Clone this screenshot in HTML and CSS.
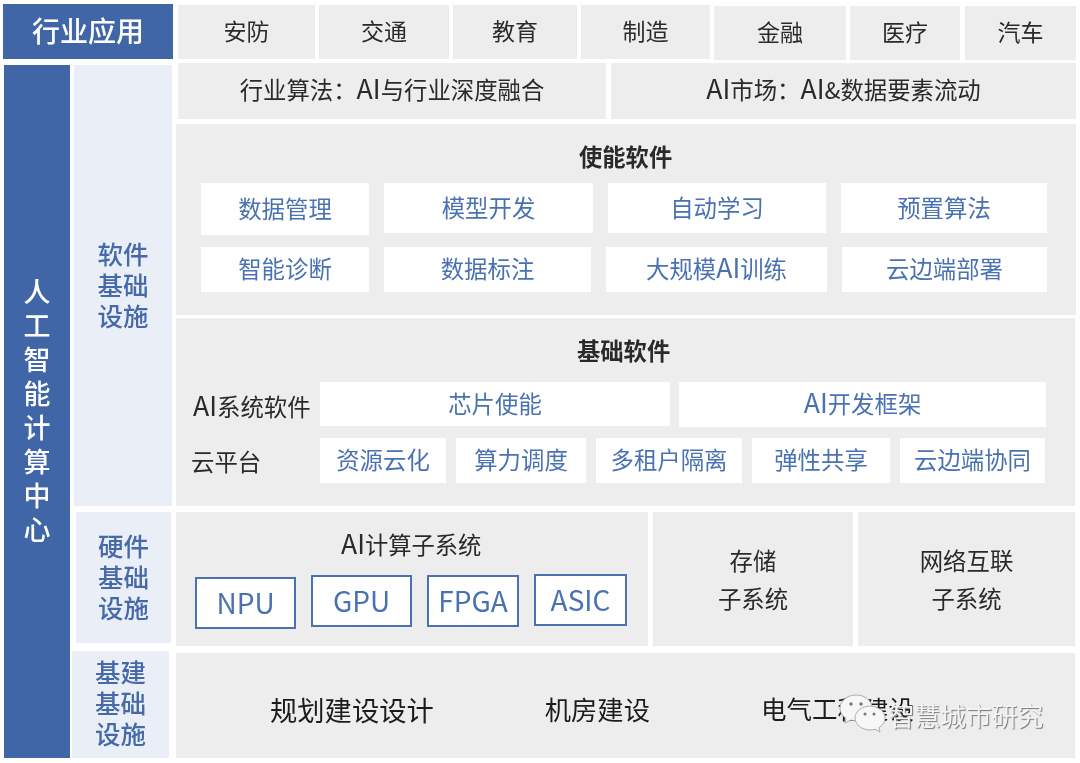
FILE: index.html
```html
<!DOCTYPE html>
<html lang="zh-CN">
<head>
<meta charset="utf-8">
<title>人工智能计算中心</title>
<link rel="stylesheet" href="styles.css">
</head>
<body>
<div class="page">
  <div class="top">
    <div class="top-head">行业应用</div>
    <div class="top-cell">安防</div>
    <div class="top-cell">交通</div>
    <div class="top-cell">教育</div>
    <div class="top-cell">制造</div>
    <div class="top-cell">金融</div>
    <div class="top-cell">医疗</div>
    <div class="top-cell">汽车</div>
  </div>
  <div class="main">
    <div class="side">人<br>工<br>智<br>能<br>计<br>算<br>中<br>心</div>
    <div class="cat cat-soft">软件<br>基础<br>设施</div>
    <div class="soft">
      <div class="algo">
        <div class="algo-cell"><span>行业算法&#xFF1A;<span class="en">AI</span>与行业深度融合</span></div>
        <div class="algo-cell"><span><span class="en">AI</span>市场&#xFF1A;<span class="en">AI</span>&amp;数据要素流动</span></div>
      </div>
      <section class="sec sec-enable">
        <h2 class="sec-title">使能软件</h2>
        <div class="row row-e1">
          <div class="item">数据管理</div>
          <div class="item">模型开发</div>
          <div class="item">自动学习</div>
          <div class="item">预置算法</div>
        </div>
        <div class="row row-e2">
          <div class="item">智能诊断</div>
          <div class="item">数据标注</div>
          <div class="item"><span>大规模<span class="en">AI</span>训练</span></div>
          <div class="item">云边端部署</div>
        </div>
      </section>
      <section class="sec sec-base">
        <h2 class="sec-title">基础软件</h2>
        <div class="row row-b1">
          <div class="label label-ai"><span><span class="en">AI</span>系统软件</span></div>
          <div class="item">芯片使能</div>
          <div class="item"><span><span class="en">AI</span>开发框架</span></div>
        </div>
        <div class="row row-b2">
          <div class="label label-cloud">云平台</div>
          <div class="item">资源云化</div>
          <div class="item">算力调度</div>
          <div class="item">多租户隔离</div>
          <div class="item">弹性共享</div>
          <div class="item">云边端协同</div>
        </div>
      </section>
    </div>
    <div class="cat cat-hard">硬件<br>基础<br>设施</div>
    <div class="hard">
      <div class="hard-ai">
        <div class="hard-title"><span class="en">AI</span>计算子系统</div>
        <div class="chips">
          <div class="chip chip-npu">NPU</div>
          <div class="chip chip-gpu">GPU</div>
          <div class="chip chip-fpga">FPGA</div>
          <div class="chip chip-asic">ASIC</div>
        </div>
      </div>
      <div class="hard-sub hard-store">存储<br>子系统</div>
      <div class="hard-sub hard-net">网络互联<br>子系统</div>
    </div>
    <div class="cat cat-infra">基建<br>基础<br>设施</div>
    <div class="infra">
      <div class="infra-a">规划建设设计</div>
      <div class="infra-b">机房建设</div>
      <div class="infra-c">电气工程建设</div>
    </div>
  </div>
  <div class="mark">
    <svg class="mark-icon" width="50" height="40" viewBox="0 0 50 40">
      <path class="mark-back" d="M18 2C9 2 2 8 2 15c0 4 2 8 6 10l-1 5 6-3c2 .5 3 .6 5 .6 9 0 16-6 16-13S27 2 18 2z"/>
      <circle class="mark-eye" cx="13" cy="11" r="1.7"/>
      <circle class="mark-eye" cx="23" cy="11" r="1.7"/>
      <path class="mark-front" d="M32 13c-8 0-15 5.500-15 12s7 12 15 12c2 0 3-.2 5-.8l5 2.800-1-4.500c4-2.300 6-5.700 6-9.500 0-6.500-7-12-15-12z"/>
      <circle class="mark-eye" cx="27" cy="21" r="1.500"/>
      <circle class="mark-eye" cx="36" cy="21" r="1.500"/>
    </svg>
    <span class="mark-text">智慧城市研究</span>
  </div>
</div>
</body>
</html>
```
FILE: styles.css
```css
* { box-sizing: border-box; }
html, body { margin: 0; padding: 0; background: #fff; }
body {
  width: 1080px;
  height: 763px;
  overflow: hidden;
  font-family: "Noto Sans CJK SC", "Noto Sans", sans-serif;
  color: #2a2a2a;
}
.page {
  position: relative;
  width: 1080px;
  height: 763px;
  filter: blur(0.4px);
}
.en { font-size: 1.14em; line-height: 0; }

/* top row */
.top {
  display: flex;
  height: 60px;
  padding: 4px 0 0 3px;
}
.top-head {
  flex: 0 0 170px;
  height: 55px;
  margin-right: 5px;
  padding-bottom: 4px;
  background: #4166a8;
  color: #fff;
  font-size: 28px;
  font-weight: 500;
  display: flex;
  align-items: center;
  justify-content: center;
}
.top-cell {
  height: 54px;
  margin-top: 1px;
  padding-bottom: 4px;
  background: #ededed;
  font-size: 23px;
  display: flex;
  align-items: center;
  justify-content: center;
}
.top-cell:nth-child(2) { flex: 0 0 137px; margin-right: 4px; }
.top-cell:nth-child(3) { flex: 0 0 130px; margin-right: 4px; }
.top-cell:nth-child(4) { flex: 0 0 124px; margin-right: 4px; }
.top-cell:nth-child(5) { flex: 0 0 129px; margin-right: 4px; }
.top-cell:nth-child(6) { flex: 0 0 132px; margin-right: 4px; margin-top: 2px; }
.top-cell:nth-child(7) { flex: 0 0 110px; margin-right: 5px; margin-top: 2px; }
.top-cell:nth-child(8) { flex: 0 0 111px; margin-top: 2px; }

/* main grid */
.main {
  display: grid;
  grid-template-columns: 66px 98px 900px;
  grid-template-rows: 443px 134px 106px;
  column-gap: 4px;
  row-gap: 6px;
  margin-top: 3px;
  padding-left: 4px;
}
.side {
  grid-column: 1;
  grid-row: 1 / 4;
  margin-top: 2px;
  padding-bottom: 4px;
  background: #4166a8;
  color: #fff;
  font-size: 27px;
  font-weight: 500;
  line-height: 34px;
  display: flex;
  align-items: center;
  justify-content: center;
  text-align: center;
}
.cat {
  grid-column: 2;
  padding-bottom: 4px;
  background: #e9eef7;
  color: #4669aa;
  font-size: 25.500px;
  font-weight: 500;
  line-height: 31px;
  display: flex;
  align-items: center;
  justify-content: center;
  text-align: center;
}
.cat-soft { grid-row: 1; margin-top: 2px; }
.cat-hard { grid-row: 2; margin: 0 1px 3px 2px; }
.cat-infra { grid-row: 3; margin: -1px 3px 0 -2px; padding-bottom: 6px; }

/* software */
.soft {
  grid-column: 3;
  grid-row: 1;
  display: flex;
  flex-direction: column;
}
.algo {
  display: flex;
  gap: 5px;
  height: 56px;
  margin: 0 0 5px 2px;
}
.algo-cell {
  padding-bottom: 4px;
  background: #ededed;
  font-size: 23.400px;
  display: flex;
  align-items: center;
  justify-content: center;
}
.algo-cell:first-child { flex: 0 0 428px; }
.algo-cell:last-child { flex: 0 0 465px; }

.sec { background: #ededed; }
.sec-enable { height: 191px; padding-left: 25px; margin-bottom: 3px; }
.sec-base { height: 188px; width: 899px; padding-left: 17px; }
.sec-title {
  margin: 0;
  padding: 15px 0 0 0;
  height: 59px;
  font-size: 23.300px;
  font-weight: 700;
  line-height: 34px;
}
.sec-enable .sec-title { padding-left: 378px; }
.sec-base .sec-title { padding-left: 384px; height: 64px; }

.row { display: flex; }
.item {
  padding-bottom: 3px;
  background: #fff;
  color: #4a72b2;
  font-size: 23.400px;
  display: flex;
  align-items: center;
  justify-content: center;
}
.row-e1 { height: 52px; gap: 15px; margin-bottom: 12px; }
.row-e2 { height: 45px; gap: 15px; }
.row-e1 .item:nth-child(1) { flex: 0 0 168px; }
.row-e1 .item:nth-child(2) { flex: 0 0 209px; height: 50px; }
.row-e1 .item:nth-child(3) { flex: 0 0 218px; height: 50px; }
.row-e1 .item:nth-child(4) { flex: 0 0 206px; height: 50px; }
.row-e2 .item:nth-child(1) { flex: 0 0 168px; }
.row-e2 .item:nth-child(2) { flex: 0 0 207px; }
.row-e2 .item:nth-child(3) { flex: 0 0 221px; }
.row-e2 .item:nth-child(4) { flex: 0 0 205px; }

.row-b1 { height: 45px; margin-bottom: 11px; }
.row-b2 { height: 45px; gap: 10px; }
.label {
  font-size: 23.400px;
  display: flex;
  align-items: center;
  white-space: nowrap;
}
.label-ai { flex: 0 0 127px; padding-top: 2px; }
.label-cloud { flex: 0 0 118px; margin-left: -2px; margin-right: 1px; }
.row-b1 .item:nth-child(2) { flex: 0 0 350px; height: 44px; margin-right: 9px; }
.row-b1 .item:nth-child(3) { flex: 0 0 367px; }
.row-b2 .item:nth-child(2) { flex: 0 0 126px; }
.row-b2 .item:nth-child(3) { flex: 0 0 130px; }
.row-b2 .item:nth-child(4) { flex: 0 0 146px; }
.row-b2 .item:nth-child(5) { flex: 0 0 138px; }
.row-b2 .item:nth-child(6) { flex: 0 0 145px; }

/* hardware */
.hard {
  grid-column: 3;
  grid-row: 2;
  display: flex;
  gap: 5px;
  width: 899px;
}
.hard-ai {
  flex: 0 0 472px;
  background: #ededed;
  padding-left: 19px;
}
.hard-title {
  padding: 15px 0 0 146px;
  height: 62px;
  font-size: 23.300px;
  line-height: 34px;
}
.chips { display: flex; gap: 15px; align-items: flex-start; }
.chip {
  height: 52px;
  padding-bottom: 2px;
  background: #fff;
  border: 2px solid #4a72b2;
  color: #4a72b2;
  font-size: 28px;
  display: flex;
  align-items: center;
  justify-content: center;
}
.chip-npu { flex: 0 0 101px; margin-top: 3px; }
.chip-gpu { flex: 0 0 101px; margin-top: 1px; }
.chip-fpga { flex: 0 0 92px; margin-top: 1px; }
.chip-asic { flex: 0 0 93px; }
.hard-sub {
  background: #ededed;
  font-size: 23.400px;
  line-height: 38px;
  text-align: center;
  padding-top: 29px;
}
.hard-store { flex: 0 0 200px; }
.hard-net { flex: 0 0 217px; }

/* infrastructure */
.infra {
  grid-column: 3;
  grid-row: 3;
  width: 899px;
  margin-top: 1px;
  background: #ededed;
  display: flex;
  align-items: center;
  gap: 111px;
  padding: 6px 0 0 94px;
  color: #1c1c1c;
}
.infra-a { font-size: 27.300px; }
.infra-b { font-size: 26.300px; }
.infra-c { font-size: 25.500px; white-space: nowrap; margin-bottom: 3px; }

/* watermark over the last row */
.mark {
  position: absolute;
  left: 838px;
  top: 693px;
  display: flex;
  align-items: flex-start;
}
.mark-icon { display: block; margin-right: 1px; }
.mark-back, .mark-front { fill: #f7f7f7; stroke: #9a9a9a; stroke-width: .8; }
.mark-eye { fill: #777; }
.mark-text {
  font-size: 25.700px;
  line-height: 44px;
  color: #f4f4f4;
  text-shadow: 1px 1px 1px #777;
  white-space: nowrap;
}
```
